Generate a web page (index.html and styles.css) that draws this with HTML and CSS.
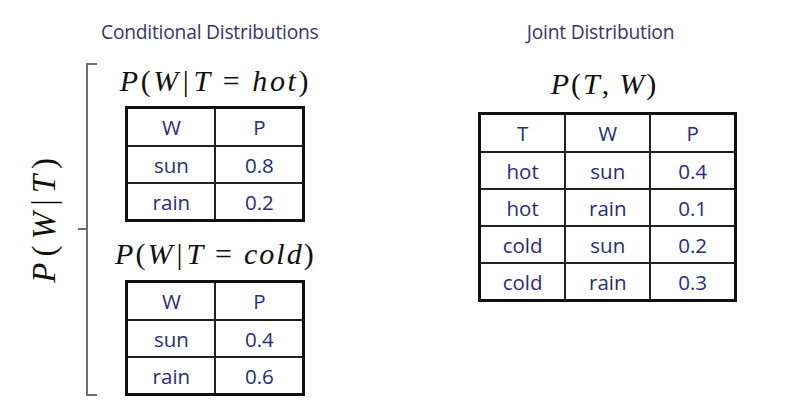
FILE: index.html
```html
<!DOCTYPE html>
<html>
<head>
<meta charset="utf-8">
<link rel="stylesheet" href="styles.css">
</head>
<body>
<div class="page">
  <section class="cond">
    <h2 class="title cond-title">Conditional Distributions</h2>
    <div class="cond-body">
      <div class="side"><span class="math side-math"><i>P</i>(<i>W</i><span class="bar">|</span><i>T</i>)</span></div>
      <div class="brace"></div>
      <div class="cond-col">
        <div class="math formula f1"><i>P</i>(<i>W</i><span class="bar">|</span><i>T</i><span class="op">=</span><i>hot</i>)</div>
        <table class="tbl">
          <tr class="head"><td>W</td><td>P</td></tr>
          <tr><td>sun</td><td>0.8</td></tr>
          <tr><td>rain</td><td>0.2</td></tr>
        </table>
        <div class="math formula f2"><i>P</i>(<i>W</i><span class="bar">|</span><i>T</i><span class="op">=</span><i>cold</i>)</div>
        <table class="tbl">
          <tr class="head"><td>W</td><td>P</td></tr>
          <tr><td>sun</td><td>0.4</td></tr>
          <tr><td>rain</td><td>0.6</td></tr>
        </table>
      </div>
    </div>
  </section>
  <section class="joint">
    <h2 class="title joint-title">Joint Distribution</h2>
    <div class="math formula f3"><i>P</i>(<i>T</i>,<i class="w2">W</i>)</div>
    <table class="tbl">
      <tr class="head"><td>T</td><td>W</td><td>P</td></tr>
      <tr><td>hot</td><td>sun</td><td>0.4</td></tr>
      <tr><td>hot</td><td>rain</td><td>0.1</td></tr>
      <tr><td>cold</td><td>sun</td><td>0.2</td></tr>
      <tr><td>cold</td><td>rain</td><td>0.3</td></tr>
    </table>
  </section>
</div>
</body>
</html>
```

FILE: styles.css
```css
html, body {
  margin: 0;
  padding: 0;
  background: #ffffff;
}
body {
  width: 800px;
  height: 410px;
  overflow: hidden;
  font-family: "Open Sans", "Noto Sans", sans-serif;
}
.page {
  display: flex;
  padding-top: 20px;
}
.title {
  margin: 0;
  font-weight: 400;
  font-size: 19.2px;
  line-height: 24px;
  color: #34346e;
  white-space: nowrap;
  letter-spacing: -0.2px;
}
.cond {
  width: 334px;
  flex: none;
}
.cond-title {
  padding-left: 101px;
}
.cond-body {
  display: flex;
  margin-top: 19px;
  height: 333px;
}
.side {
  width: 86px;
  display: flex;
  align-items: center;
  justify-content: center;
  padding-left: 4px;
  padding-bottom: 24px;
  box-sizing: border-box;
}
.side-math {
  writing-mode: vertical-rl;
  transform: rotate(180deg);
  font-size: 33px;
  letter-spacing: 6px;
}
.side-math .bar {
  margin: 0 3px;
}
.brace {
  width: 9px;
  border: 2px solid #6e6e6e;
  border-right: none;
  position: relative;
  flex: none;
}
.brace::before {
  content: "";
  position: absolute;
  left: -10px;
  top: 50%;
  width: 9px;
  height: 2px;
  margin-top: -2px;
  background: #6e6e6e;
}
.cond-col {
  width: 238px;
  display: flex;
  flex-direction: column;
  align-items: center;
}
.math {
  font-family: "Liberation Serif", "DejaVu Serif", serif;
  color: #111;
  white-space: nowrap;
}
.math i {
  font-style: italic;
}
.formula {
  font-size: 30px;
  line-height: 32px;
  letter-spacing: 2px;
}
.bar {
  margin: 0 2px;
}
.op {
  margin: 0 10px;
}
.f1 {
  margin-top: 2px;
  margin-bottom: 9px;
  letter-spacing: 2.6px;
}
.f2 {
  margin-top: 16px;
  margin-bottom: 10px;
}
.tbl {
  border-collapse: collapse;
  border: 3px solid #111;
  font-family: "Open Sans", "Noto Sans", sans-serif;
  font-size: 20.5px;
  color: #2b2b7a;
}
.tbl td {
  border: 2px solid #222;
  text-align: center;
  padding: 0;
  height: 35px;
  width: 86px;
}
.tbl .head td {
  height: 36px;
}
.joint {
  margin-left: 144px;
  width: 259px;
  flex: none;
  display: flex;
  flex-direction: column;
  align-items: center;
}
.joint-title {
  margin-right: 14px;
}
.f3 {
  margin-top: 24px;
  margin-bottom: 12px;
  margin-right: 6px;
}
.f3 .w2 {
  margin-left: 8px;
}
```
